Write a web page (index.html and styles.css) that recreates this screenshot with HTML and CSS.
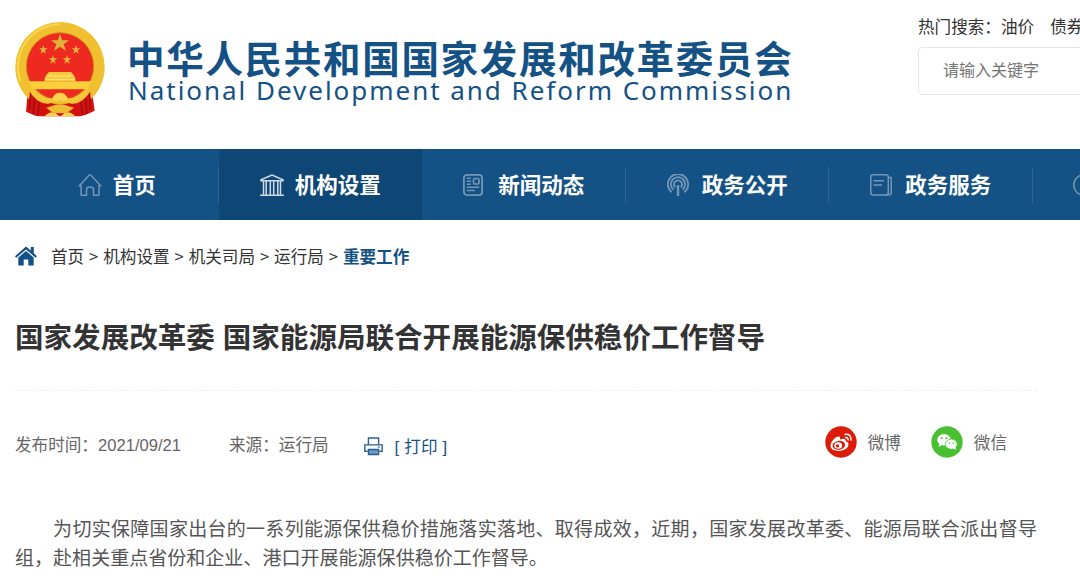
FILE: index.html
```html
<!DOCTYPE html>
<html lang="zh-CN">
<head>
    <meta charset="UTF-8">
    <meta name="viewport" content="width=device-width, initial-scale=1.0">
    <title>国家发展改革委 国家能源局联合开展能源保供稳价工作督导</title>
    <link rel="stylesheet" href="styles.css">
</head>
<body>
    <header>
        <svg class="emblem" viewBox="45 30 270 300">
            <path d="M84 238L78 305L108 318L126 319L240 319L256 315L284 302L275 238L250 250L112 250Z" fill="#d3120f"/>
            <path d="M92 250L88 300M104 262L100 312M118 276L114 314M268 250L272 300M256 262L260 310M242 276L248 314" stroke="#9e0c0c" stroke-width="4" fill="none"/>
            <path d="M180 36a135 135 0 0 0-93 232q3-16 2-26l34 22q18 18 57 18t57-18l34-22q-1 14 2 26A135 135 0 0 0 180 36z" fill="#f0c031"/>
            <path d="M180 43a127 127 0 0 0-118 172" fill="none" stroke="#f9d750" stroke-width="6"/>
            <circle cx="180" cy="169" r="101" fill="#ee2a20" stroke="#c98f1c" stroke-width="3"/>
            <path d="M88 214h184l-8 24H96z" fill="#f9cf3c"/>
            <path d="M134 202h92v12h-92zM137 197l10-11h66l10 11v6h-86z" fill="#f6c93c"/>
            <path d="M139 198h82M136 209h88" stroke="#fde682" stroke-width="3"/>
            <path d="M98 237Q134 272 158 264Q164 247 180 248Q196 247 202 264Q226 272 262 237L274 240Q246 285 214 281Q180 265 146 281Q112 284 86 240Z" fill="#f4c638"/>
            <path d="M139 293L158 287Q180 279 202 287L222 293L206 305Q180 315 154 305Z" fill="#eebd31"/>
            <path d="M134 319Q150 302 166 308L178 319zM226 319Q210 302 194 308L182 319z" fill="#f6d250"/>
            <path d="M157 265q5-14 23-14t23 14l-13 9q-10-8-20 0z" fill="#fad44c"/>
            <g fill="#e0b43a">
                <path d="M180 72l6.500 18.500h20.500l-16 12 7 20-18-12-18 12 7-20-16-12h20.500z"/>
                <path d="M130 105l3 10h10l-8 6 3 10-8-6-8 6 3-10-8-6h10z"/>
                <path d="M228 105l3 10h10l-8 6 3 10-8-6-8 6 3-10-8-6h10z"/>
                <path d="M159 135l3 10h10l-8 6 3 10-8-6-8 6 3-10-8-6h10z"/>
                <path d="M201 135l3 10h10l-8 6 3 10-8-6-8 6 3-10-8-6h10z"/>
            </g>
        </svg>
        <div class="logo">
            <div class="logo-cn">中华人民共和国国家发展和改革委员会</div>
            <div class="logo-en">National Development and Reform Commission</div>
        </div>
        <div class="search">
            <div class="hot">热门搜索：<a href="#">油价</a><a href="#">债券</a></div>
            <input type="text" placeholder="请输入关键字">
        </div>
    </header>
    <nav>
        <a href="#">
            <svg viewBox="0 0 24 22"><path d="M.7 12.5L11 1.2q1-.9 2 0l10.3 11.3M3 11v9.5q0 .8.8.8h4.7v-5.800q0-2.500 3.500-2.500t3.500 2.500v5.800h4.700q.8 0 .8-.8V11"/></svg>
            <span>首页</span>
        </a>
        <a href="#" class="active">
            <svg viewBox="0 0 24 22"><path d="M1 5.7L12 1l11 4.700v1H1zM0 21.200h24M3.500 7v13.500M6.200 7v13.500M10.300 7v13.500M13.700 7v13.500M17.800 7v13.500M20.500 7v13.500"/></svg>
            <span>机构设置</span>
        </a>
        <a href="#">
            <svg viewBox="0 0 24 22"><rect x=".9" y=".9" width="18.2" height="20.2" rx="3" stroke-width="1.8"/><rect x="10.5" y="4.5" width="5.5" height="5.5" rx="1.4" stroke-width="1.7"/><path d="M3.8 4.2h4M3.8 7.2h4M3.8 10.2h4M3.8 13.3h12.5M3.8 16.5h8"/></svg>
            <span>新闻动态</span>
        </a>
        <a href="#">
            <svg viewBox="0 0 24 22"><path d="M4.6 18.2A10.2 10.2 0 1 1 17.4 18.2M6.4 15.6A7.1 7.1 0 1 1 15.6 15.6M8.3 13.3A4 4 0 1 1 13.7 13.3" stroke-width="1.9"/><path d="M11 11v11" stroke-width="2.5"/></svg>
            <span>政务公开</span>
        </a>
        <a href="#">
            <svg viewBox="0 0 24 22"><rect x=".8" y=".8" width="17.5" height="20.2" rx="2.5"/><path d="M3.5 6.8h10.5M3.5 11h8.5M18.5 3.5h2.7v15.2q0 2.3-2.8 2.3h-3"/></svg>
            <span>政务服务</span>
        </a>
        <a href="#">
            <svg viewBox="0 0 24 22"><circle cx="11" cy="11" r="10.2"/></svg>
        </a>
    </nav>
    <main>
        <div class="crumbs">
            <svg viewBox="0 0 22 20"><path d="M11 .5L0 10.2l1.3 1.5L11 3.5l9.7 8.2 1.3-1.5-3.2-2.9V1h-3v3.6z"/><path d="M11 5L3.3 11.5V19.5H8.7V13.5H13.3V19.5H18.7V11.5z"/></svg>
            <div><a href="#">首页</a> &gt; <a href="#">机构设置</a> &gt; <a href="#">机关司局</a> &gt; <a href="#">运行局</a> &gt; <a href="#" class="current">重要工作</a></div>
        </div>
        <h1>国家发展改革委 国家能源局联合开展能源保供稳价工作督导</h1>
        <div class="meta">
            <span class="date">发布时间：2021/09/21</span>
            <span class="source">来源：运行局</span>
            <a href="#" class="print">
                <svg viewBox="0 0 18 18"><path d="M4.2 7V1h9.6v6M3.5 13.5H.8V7.5h16.4v6h-2.7" fill="none" stroke="#2a5f8f" stroke-width="1.3"/><path d="M4.2 11.8h9.6v4.8H4.2z" fill="#6d9bc3" stroke="#2a5f8f" stroke-width="1.3"/><path d="M13 9.6h2" stroke="#2a5f8f"/></svg>
                [ 打印 ]
            </a>
            <div class="share">
                <a href="#">
                    <svg viewBox="0 0 32 32">
                        <circle cx="16" cy="16" r="15.7" fill="#dc1b08"/>
                        <path d="M5.5 19.7C5.5 15 12.2 9.2 14.5 10.7Q15.6 11.5 15 13.5Q21 11.5 20.7 15.3Q24.3 16.5 23.3 19.5C21.8 26.5 5.5 26.8 5.5 19.7z" fill="#fff"/>
                        <ellipse cx="13.8" cy="19.3" rx="6.3" ry="4.4" fill="#dc1b08" transform="rotate(-8 13.8 19.3)"/>
                        <ellipse cx="13.2" cy="19.5" rx="3.9" ry="3.3" fill="#fff"/>
                        <circle cx="12.5" cy="19.9" r="1.7" fill="#dc1b08"/>
                        <path d="M19.5 8.5Q26.8 7.3 26 14.7M20 11.6Q23.6 11 23 14.5" fill="none" stroke="#fff" stroke-width="1.5"/>
                    </svg>
                    微博
                </a>
                <a href="#">
                    <svg viewBox="0 0 32 32">
                        <circle cx="16" cy="16" r="15.7" fill="#48c032"/>
                        <ellipse cx="13" cy="13.7" rx="6.8" ry="5.7" fill="#fff"/>
                        <path d="M8.5 17l-1 4 4-2.3z" fill="#fff"/>
                        <ellipse cx="20.2" cy="18.2" rx="6" ry="5.1" fill="#fff" stroke="#48c032" stroke-width=".8"/>
                        <path d="M21.5 22l3.5 2-.8-3.2z" fill="#fff"/>
                        <g fill="#48c032"><circle cx="10.8" cy="12.2" r="1"/><circle cx="15.3" cy="12.2" r="1"/><circle cx="18.3" cy="17" r=".8"/><circle cx="22.2" cy="17" r=".8"/></g>
                    </svg>
                    微信
                </a>
            </div>
        </div>
        <p>为切实保障国家出台的一系列能源保供稳价措施落实落地、取得成效，近期，国家发展改革委、能源局联合派出督导组，赴相关重点省份和企业、港口开展能源保供稳价工作督导。</p>
    </main>
</body>
</html>
```

FILE: styles.css
```css
body {
    margin: 0;
    padding: 0;
    background-color: #fff;
    font-family: "Liberation Sans", "Noto Sans CJK SC", sans-serif;
    font-size: 16.6px;
    color: #333;
    overflow: hidden;
}
a {
    color: inherit;
    text-decoration: none;
}
header {
    display: flex;
    height: 149px;
    padding-left: 15px;
    box-sizing: border-box;
    overflow: hidden;
}
.emblem {
    flex: none;
    width: 90px;
    height: 100px;
    margin-top: 20px;
}
.logo {
    flex: none;
    width: 790px;
    margin-left: 22px;
    padding-top: 34px;
    color: #145185;
    white-space: nowrap;
}
.logo-cn {
    font-family: "Noto Sans CJK SC", sans-serif;
    font-weight: bold;
    font-size: 37.5px;
    letter-spacing: 1.7px;
    line-height: 46px;
}
.logo-en {
    padding-left: 1px;
    font-family: "Noto Sans", sans-serif;
    font-size: 26px;
    letter-spacing: 1.97px;
    line-height: 20px;
}
.search {
    flex: none;
    width: 300px;
    padding-top: 15px;
    margin-left: 1px;
}
.hot {
    line-height: 26px;
    white-space: nowrap;
}
.hot a {
    margin-right: 16px;
}
.search input {
    display: block;
    width: 300px;
    height: 48px;
    margin-top: 6px;
    padding: 0 24px;
    box-sizing: border-box;
    border: 1px solid #e6e6e6;
    border-radius: 4px;
    font: inherit;
    font-size: 16px;
}
.search input::placeholder {
    color: #757575;
}
nav {
    display: flex;
    height: 71px;
    padding-left: 15px;
    background: #145185;
    color: #fff;
    overflow: hidden;
}
nav a {
    flex: none;
    display: flex;
    justify-content: center;
    align-items: center;
    gap: 12px;
    width: 203.5px;
    font-size: 21.5px;
    font-weight: bold;
    background: linear-gradient(#2f6593, #2f6593) right center / 1px 36px no-repeat;
}
nav a:last-child {
    justify-content: flex-start;
    padding-left: 40px;
}
nav a.active {
    background: #0e4675;
}
nav span {
    margin-left: -1px;
    padding-bottom: 3px;
}
nav svg {
    width: 24px;
    height: 22px;
    fill: none;
    stroke: #fff;
    stroke-width: 1.5;
    opacity: .4;
}
nav .active svg {
    opacity: .8;
}
main {
    width: 1024px;
    margin-left: 15px;
}
.crumbs {
    display: flex;
    align-items: center;
    gap: 14px;
    height: 72px;
    font-family: "Noto Sans CJK SC", sans-serif;
    word-spacing: 1.2px;
}
.crumbs svg {
    width: 22px;
    height: 20px;
    fill: #145185;
}
.crumbs .current {
    color: #145185;
    font-weight: bold;
}
h1 {
    width: 1022px;
    height: 98px;
    margin: 0;
    border-bottom: 1px dashed #eee;
    font-size: 28.55px;
    line-height: 92px;
    white-space: nowrap;
}
.meta {
    display: flex;
    align-items: center;
    height: 108px;
    color: #666;
}
.date, .source {
    padding-bottom: 2px;
}
.source {
    margin-left: 48px;
}
.print {
    display: flex;
    align-items: center;
    gap: 12px;
    margin-left: 35px;
    padding-top: 2px;
    color: #145185;
    word-spacing: .5px;
}
.print svg {
    width: 19px;
    height: 19px;
}
.share {
    display: flex;
    gap: 30px;
    margin-left: auto;
    margin-right: 32px;
    padding-bottom: 7px;
}
.share a {
    display: flex;
    align-items: center;
    gap: 11px;
}
.share svg {
    width: 32px;
    height: 32px;
}
p {
    width: 1022px;
    margin: 17px 0 0;
    font-size: 19.05px;
    line-height: 28.6px;
    text-indent: 2em;
    text-align: justify;
    color: #555;
}
```
